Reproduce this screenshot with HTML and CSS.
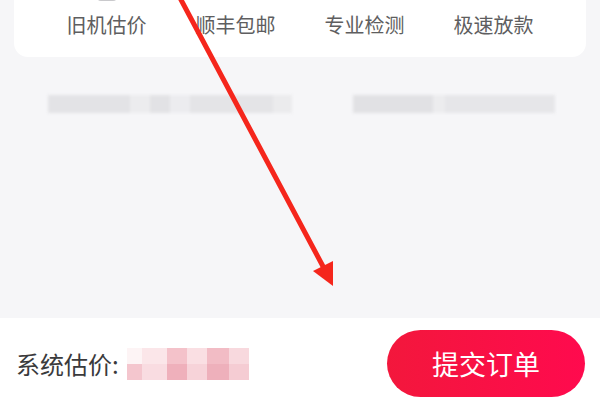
FILE: index.html
```html
<!DOCTYPE html>
<html lang="zh-CN">
<head>
<meta charset="utf-8">
<title>提交订单</title>
<link rel="stylesheet" href="styles.css">
</head>
<body>
<div class="page">
  <section class="service-card">
    <div class="service">
      <svg class="service-icon" viewBox="0 0 32 32"><rect x="7" y="2" width="18" height="28" rx="3" fill="none" stroke="#c9c9cc" stroke-width="2"/></svg>
      <span class="service-label">旧机估价</span>
    </div>
    <div class="service">
      <svg class="service-icon" viewBox="0 0 32 32"><path d="M4 10h17v16H4zM21 15h5l3 5v6h-8" fill="none" stroke="#d2d2d5" stroke-width="2"/></svg>
      <span class="service-label">顺丰包邮</span>
    </div>
    <div class="service">
      <svg class="service-icon" viewBox="0 0 32 32"><circle cx="16" cy="16" r="13" fill="none" stroke="#d4d4d7" stroke-width="2"/></svg>
      <span class="service-label">专业检测</span>
    </div>
    <div class="service">
      <svg class="service-icon" viewBox="0 0 32 32"><circle cx="16" cy="16" r="13" fill="none" stroke="#d4d4d7" stroke-width="2"/></svg>
      <span class="service-label">极速放款</span>
    </div>
  </section>

  <section class="notes">
    <div class="note note-left">
      <span class="seg seg-a"></span><span class="seg seg-b"></span><span class="seg seg-c"></span><span class="seg seg-d"></span><span class="seg seg-e"></span><span class="seg seg-f"></span>
    </div>
    <div class="note note-right">
      <span class="seg seg-g"></span><span class="seg seg-h"></span><span class="seg seg-i"></span>
    </div>
  </section>

  <div class="spacer"></div>

  <footer class="order-bar">
    <div class="estimate">
      <span class="estimate-label">系统估价:</span>
      <span class="price-mask">
        <span class="px p1"></span><span class="px p2"></span><span class="px p3"></span><span class="px p4"></span><span class="px p5"></span><span class="px p6"></span>
        <span class="px q1"></span><span class="px q2"></span><span class="px q3"></span><span class="px q4"></span><span class="px q5"></span><span class="px q6"></span>
      </span>
    </div>
    <button class="submit">提交订单</button>
  </footer>
</div>

<svg class="pointer" viewBox="0 0 600 400" width="600" height="400">
  <line x1="179" y1="-4" x2="326" y2="272" stroke="#f5261c" stroke-width="5" stroke-linecap="round"/>
  <polygon points="333,286 313,271 333,261" fill="#f5261c"/>
</svg>
</body>
</html>
```

FILE: styles.css
```css
* { box-sizing: border-box; }

html, body {
  margin: 0;
  padding: 0;
  overflow: hidden;
}

body {
  width: 600px;
  height: 400px;
  background: #f6f6f8;
  font-family: "Noto Sans CJK SC", "Noto Sans", sans-serif;
  position: relative;
}

.page {
  height: 400px;
  display: flex;
  flex-direction: column;
}

/* service highlights card, scrolled partly out of view */
.service-card {
  margin: -36px 14px 0;
  padding: 6px 28px 21px;
  background: #ffffff;
  border-radius: 14px;
  display: grid;
  grid-template-columns: repeat(4, 1fr);
}

.service {
  display: flex;
  flex-direction: column;
  align-items: center;
}

.service-icon {
  width: 32px;
  height: 32px;
}

.service-label {
  margin-top: 12px;
  font-size: 20px;
  line-height: 22px;
  color: #5e5e60;
}

/* masked notes under the card */
.notes {
  margin-top: 38px;
  display: flex;
  padding-left: 48px;
  gap: 61px;
  filter: blur(1.5px);
}

.note {
  display: flex;
  height: 18px;
}

.seg { display: block; height: 100%; }
.seg-a { width: 82px; background: #e3e3e6; }
.seg-b { width: 20px; background: #ececee; }
.seg-c { width: 20px; background: #e2e2e5; }
.seg-d { width: 20px; background: #ececef; }
.seg-e { width: 83px; background: #e4e4e7; }
.seg-f { width: 19px; background: #ebebed; }
.seg-g { width: 80px; background: #e1e1e4; }
.seg-h { width: 12px; background: #ececee; }
.seg-i { width: 110px; background: #e6e6e9; }

.spacer { flex: 1; }

/* bottom order bar */
.order-bar {
  height: 82px;
  background: #ffffff;
  display: flex;
  align-items: center;
  justify-content: space-between;
  padding: 9px 15px 0 16px;
}

.estimate {
  display: flex;
  align-items: center;
}

.estimate-label {
  font-size: 24px;
  color: #3a3a3c;
  line-height: 30px;
}

.price-mask {
  margin-left: 8px;
  display: grid;
  grid-template-columns: 15px 25px 20px 20px 22px 20px;
  grid-template-rows: 16px 16px;
  filter: blur(0.6px);
}

.px { display: block; }
.p1 { background: #fdf4f5; }
.p2 { background: #fbe6e9; }
.p3 { background: #f4c2ca; }
.p4 { background: #fadfe3; }
.p5 { background: #f2bcc5; }
.p6 { background: #f8d9de; }
.q1 { background: #f4c6ce; }
.q2 { background: #f9dce1; }
.q3 { background: #efb0bb; }
.q4 { background: #f7d3d9; }
.q5 { background: #eeb0bb; }
.q6 { background: #f5ccd3; }

.submit {
  width: 198px;
  height: 67px;
  border: none;
  border-radius: 34px;
  background: linear-gradient(90deg, #f3173c, #ff0a4e);
  color: #ffffff;
  font-family: inherit;
  font-size: 27px;
  padding: 0;
}

/* annotation arrow drawn over the page */
.pointer {
  position: absolute;
  left: 0;
  top: 0;
  pointer-events: none;
}
```
